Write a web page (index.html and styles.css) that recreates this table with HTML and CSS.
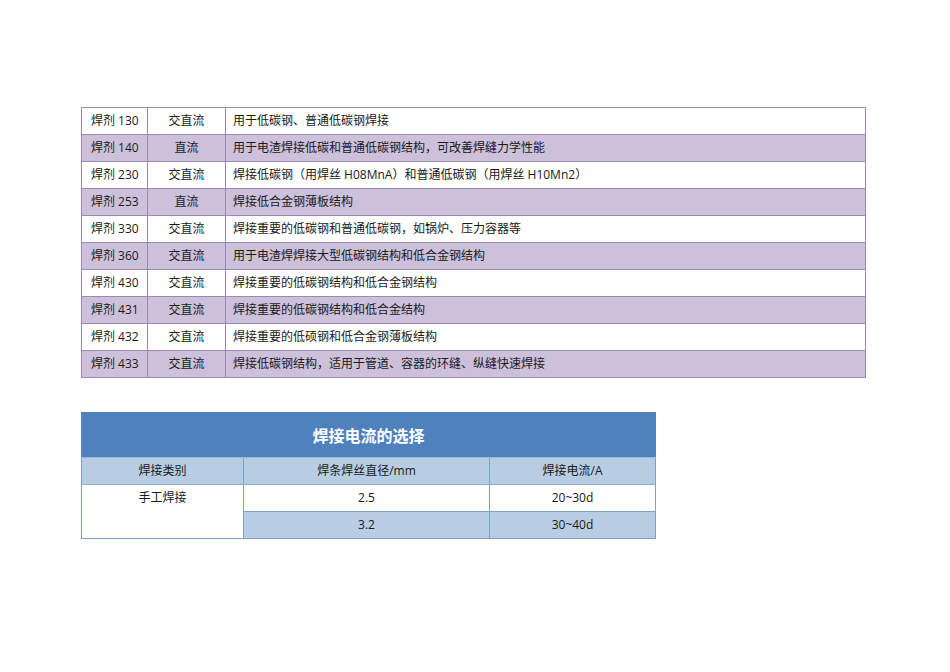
FILE: index.html
```html
<!DOCTYPE html>
<html lang="zh">
<head>
<meta charset="utf-8">
<link rel="stylesheet" href="styles.css">
</head>
<body>
<div class="page">
  <table class="flux">
    <colgroup><col class="c1"><col class="c2"><col class="c3"></colgroup>
    <tr><td>焊剂 130</td><td class="mid">交直流</td><td>用于低碳钢、普通低碳钢焊接</td></tr>
    <tr class="alt"><td>焊剂 140</td><td class="mid">直流</td><td>用于电渣焊接低碳和普通低碳钢结构，可改善焊缝力学性能</td></tr>
    <tr><td>焊剂 230</td><td class="mid">交直流</td><td>焊接低碳钢（用焊丝 H08MnA）和普通低碳钢（用焊丝 H10Mn2）</td></tr>
    <tr class="alt"><td>焊剂 253</td><td class="mid">直流</td><td>焊接低合金钢薄板结构</td></tr>
    <tr><td>焊剂 330</td><td class="mid">交直流</td><td>焊接重要的低碳钢和普通低碳钢，如锅炉、压力容器等</td></tr>
    <tr class="alt"><td>焊剂 360</td><td class="mid">交直流</td><td>用于电渣焊焊接大型低碳钢结构和低合金钢结构</td></tr>
    <tr><td>焊剂 430</td><td class="mid">交直流</td><td>焊接重要的低碳钢结构和低合金钢结构</td></tr>
    <tr class="alt"><td>焊剂 431</td><td class="mid">交直流</td><td>焊接重要的低碳钢结构和低合金结构</td></tr>
    <tr><td>焊剂 432</td><td class="mid">交直流</td><td>焊接重要的低硕钢和低合金钢薄板结构</td></tr>
    <tr class="alt"><td>焊剂 433</td><td class="mid">交直流</td><td>焊接低碳钢结构，适用于管道、容器的环缝、纵缝快速焊接</td></tr>
  </table>

  <table class="current">
    <colgroup><col class="d1"><col class="d2"><col class="d3"></colgroup>
    <tr class="title"><th colspan="3">焊接电流的选择</th></tr>
    <tr class="sub"><td>焊接类别</td><td>焊条焊丝直径/mm</td><td>焊接电流/A</td></tr>
    <tr><td rowspan="2" class="kind">手工焊接</td><td>2.5</td><td>20~30d</td></tr>
    <tr class="blue"><td>3.2</td><td>30~40d</td></tr>
  </table>
</div>
</body>
</html>
```

FILE: styles.css
```css
html, body {
  margin: 0;
  padding: 0;
  background: #ffffff;
}
body {
  font-family: "Open Sans", "Noto Sans CJK SC", sans-serif;
  font-size: 12px;
  color: #1a1a1a;
}
.page {
  padding: 107px 0 0 81px;
}
table {
  border-collapse: collapse;
  table-layout: fixed;
}
.flux {
  width: 785px;
  border: 1px solid #8f7bab;
}
.flux col.c1 { width: 66px; }
.flux col.c2 { width: 78px; }
.flux td {
  height: 26px;
  padding: 0 0 0 9px;
  border: 1px solid #9b88b6;
  line-height: 26px;
  white-space: nowrap;
  vertical-align: middle;
}
.flux td:last-child { padding-left: 7px; }
.flux td.mid {
  text-align: center;
  padding: 0;
}
.flux tr.alt td { background: #ccc0da; }

.current {
  margin-top: 34px;
  width: 575px;
  border: 1px solid #7f9fcf;
}
.current col.d1 { width: 162px; }
.current col.d2 { width: 246px; }
.current th {
  height: 44px;
  background: #4f81bd;
  color: #ffffff;
  font-size: 16px;
  font-weight: bold;
  text-align: center;
  padding: 0;
  border: 1px solid #4f81bd;
  border-bottom: 1px solid #9bb8dc;
}
.current td {
  height: 26px;
  line-height: 26px;
  padding: 0;
  text-align: center;
  border: 1px solid #7f9fcf;
  vertical-align: middle;
}
.current tr.sub td {
  background: #b8cce4;
  border-top: none;
  border-bottom: 1px solid #8fadd6;
}
.current td.kind {
  vertical-align: top;
  background: #ffffff;
  border-bottom: 1px solid #7f9fcf;
}
.current tr.blue td {
  background: #b8cce4;
  border-top: 1px solid #7f9fcf;
}
```
